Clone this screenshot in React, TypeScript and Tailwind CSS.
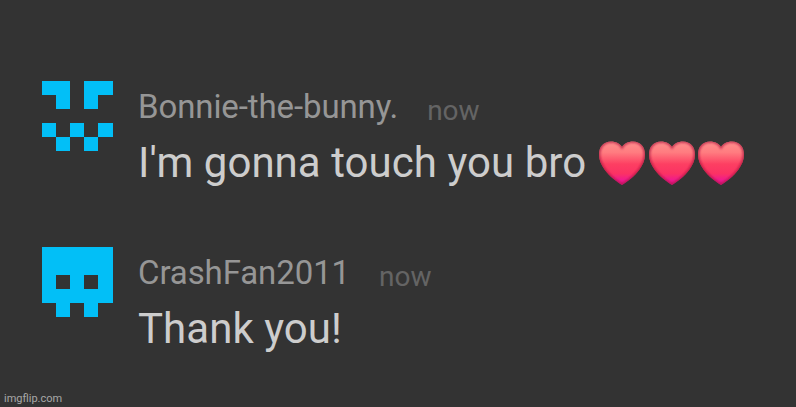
import { useId } from "react";

const COMMENTS = [
  {
    name: "Bonnie-the-bunny.",
    time: "now",
    text: "I'm gonna touch you bro",
    hearts: 3,
    avatar: ["##.##", ".#.#.", ".....", "#.#.#", ".#.#."],
  },
  {
    name: "CrashFan2011",
    time: "now",
    text: "Thank you!",
    hearts: 0,
    avatar: ["#####", "#####", "#.#.#", "#####", ".#.#."],
  },
];

function PixelAvatar({ rows }: { rows: string[] }) {
  return (
    <svg
      viewBox="0 0 71 70"
      shapeRendering="crispEdges"
      className="h-[70px] w-[71px] shrink-0 text-[#02bff7]"
      fill="currentColor"
    >
      {rows.flatMap((row, y) =>
        row
          .split("")
          .map((cell, x) =>
            cell === "#" ? (
              <rect
                key={`${x}-${y}`}
                x={x * 14}
                y={y * 14}
                width={x === 4 ? 15 : 14}
                height="14"
              />
            ) : null,
          ),
      )}
    </svg>
  );
}

function Heart() {
  const id = useId();
  const shape =
    "M23 44 C18 41 10.5 35.5 5.5 28.5 C2 23.5 0 19 0 13.5 C0 5.5 5 0.5 12 0.5 C17 0.5 21 2.6 23 6 C25 2.6 29 0.5 34 0.5 C41 0.5 46 5.5 46 13.5 C46 19 44 23.5 40.5 28.5 C35.5 35.5 28 41 23 44 Z";
  return (
    <svg viewBox="0 0 46 45" className="h-[45px] w-[46px]">
      <defs>
        <linearGradient id={`${id}fill`} x1="0" y1="0" x2="0" y2="1">
          <stop offset="0" stopColor="#ff8f8d" />
          <stop offset="0.25" stopColor="#ff7c80" />
          <stop offset="0.52" stopColor="#fd3f62" />
          <stop offset="0.74" stopColor="#fb3264" />
          <stop offset="0.88" stopColor="#f01c8c" />
          <stop offset="1" stopColor="#d8148c" />
        </linearGradient>
        <clipPath id={`${id}clip`}>
          <path d={shape} />
        </clipPath>
        <filter id={`${id}soft`}>
          <feGaussianBlur stdDeviation="1.3" />
        </filter>
      </defs>
      <path d={shape} fill={`url(#${id}fill)`} />
      <g clipPath={`url(#${id}clip)`}>
        <path
          d={shape}
          fill="none"
          stroke="#b01840"
          strokeOpacity="0.8"
          strokeWidth="2.6"
          filter={`url(#${id}soft)`}
        />
      </g>
    </svg>
  );
}

function Comment({ name, time, text, hearts, avatar }: (typeof COMMENTS)[0]) {
  return (
    <div className="flex h-[166px] items-start gap-[25px]">
      <PixelAvatar rows={avatar} />
      <div className="flex flex-col pt-px">
        <div className="flex h-[50px] items-baseline gap-[29px] whitespace-nowrap">
          <span className="text-[33px] leading-[50px] tracking-[-0.1px] text-[#969696]">
            {name}
          </span>
          <span className="translate-y-0.5 text-[28px] text-[#646464]">
            {time}
          </span>
        </div>
        <div className="mt-1.5 flex h-[50px] items-center whitespace-nowrap">
          <span className="text-[42px] leading-[50px] tracking-[0.04px] text-[#cdcdcd]">
            {text}
          </span>
          {hearts > 0 && (
            <div className="ml-[13px] flex gap-[3.5px]">
              {Array.from({ length: hearts }, (_, i) => (
                <Heart key={i} />
              ))}
            </div>
          )}
        </div>
      </div>
    </div>
  );
}

export default function App() {
  return (
    <main className="flex h-[407px] w-[796px] flex-col overflow-hidden bg-[#333333] font-['Roboto',sans-serif]">
      <div className="h-[391px] shrink-0 pt-[81px] pl-[42px]">
        {COMMENTS.map((comment) => (
          <Comment key={comment.name} {...comment} />
        ))}
      </div>
      <span className="pl-1 text-[11px] leading-4 text-[#a8a8a8]">
        imgflip.com
      </span>
    </main>
  );
}
